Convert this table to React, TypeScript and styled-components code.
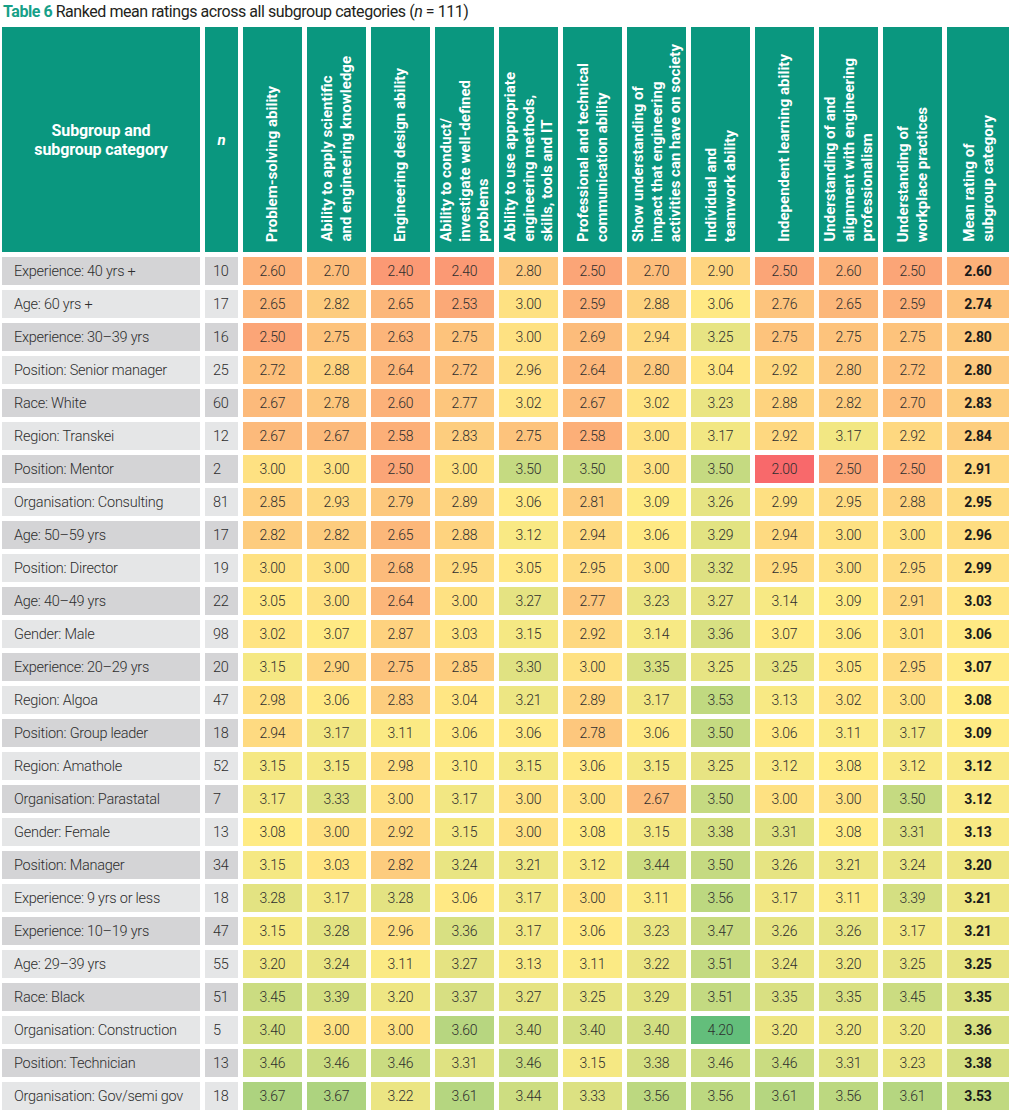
import React from 'react'
import styled, { createGlobalStyle } from 'styled-components'

const GlobalStyle = createGlobalStyle`
  html, body {
    margin: 0;
    padding: 0;
    background: #ffffff;
  }
  body {
    font-family: Roboto, "Liberation Sans", Arial, sans-serif;
    color: #333333;
  }
`

const Page = styled.div`
  padding: 2px 0 0 2px;
  width: 1013px;
`

const Title = styled.div`
  font-size: 16px;
  line-height: 20px;
  color: #231f20;
  letter-spacing: -0.45px;
  margin: 0 0 5px 1px;
  white-space: nowrap;
`

const TableNo = styled.span`
  color: #16a088;
  font-weight: 700;
`

const Grid = styled.div`
  display: grid;
  grid-template-columns: 198px 33px repeat(11, 59px) 62px;
  grid-template-rows: 225px repeat(26, 28px);
  column-gap: 5px;
  row-gap: 5px;
`

const HeadCell = styled.div<{ $centered?: boolean }>`
  background: #0a977f;
  color: #ffffff;
  font-weight: 700;
  display: flex;
  justify-content: center;
  align-items: ${(p) => (p.$centered ? 'center' : 'flex-end')};
  padding-bottom: ${(p) => (p.$centered ? '0' : '10px')};
  box-sizing: border-box;
  text-align: center;
`

const CategoryHead = styled.div`
  font-size: 16px;
  line-height: 19px;
  letter-spacing: -0.1px;
`

const NHead = styled.div`
  font-size: 15px;
  font-style: italic;
`

const VerticalLabel = styled.div`
  writing-mode: vertical-rl;
  transform: rotate(180deg);
  text-align: left;
  white-space: nowrap;
  font-size: 15px;
  line-height: 18.5px;
  letter-spacing: 0;
`

const LabelCell = styled.div<{ $dark: boolean }>`
  background: ${(p) => (p.$dark ? '#d4d4d6' : '#e5e6e7')};
  display: flex;
  align-items: center;
  padding-left: 12px;
  font-size: 14.5px;
  font-weight: 300;
  color: #2e2e2e;
  white-space: nowrap;
  letter-spacing: -0.25px;
`

const CountCell = styled(LabelCell)`
  padding-left: 8px;
`

const ValueCell = styled.div<{ $bold?: boolean }>`
  display: flex;
  align-items: center;
  justify-content: center;
  font-size: 14px;
  font-weight: ${(p) => (p.$bold ? 700 : 300)};
  color: ${(p) => (p.$bold ? '#1a1a1a' : '#2e2e2e')};
  letter-spacing: -0.2px;
`

const headers: string[][] = [
  ['Problem-solving ability'],
  ['Ability to apply scientific', 'and engineering knowledge'],
  ['Engineering design ability'],
  ['Ability to conduct/', 'investigate well-defined', 'problems'],
  ['Ability to use appropriate', 'engineering methods,', 'skills, tools and IT'],
  ['Professional and technical', 'communication ability'],
  ['Show understanding of', 'impact that engineering', 'activities can have on society'],
  ['Individual and', 'teamwork ability'],
  ['Independent learning ability'],
  ['Understanding of and', 'alignment with engineering', 'professionalism'],
  ['Understanding of', 'workplace practices'],
  ['Mean rating of', 'subgroup category'],
]

type Row = [string, number, number[]]

const rows: Row[] = [
  ['Experience: 40 yrs +', 10, [2.6, 2.7, 2.4, 2.4, 2.8, 2.5, 2.7, 2.9, 2.5, 2.6, 2.5, 2.6]],
  ['Age: 60 yrs +', 17, [2.65, 2.82, 2.65, 2.53, 3.0, 2.59, 2.88, 3.06, 2.76, 2.65, 2.59, 2.74]],
  ['Experience: 30–39 yrs', 16, [2.5, 2.75, 2.63, 2.75, 3.0, 2.69, 2.94, 3.25, 2.75, 2.75, 2.75, 2.8]],
  ['Position: Senior manager', 25, [2.72, 2.88, 2.64, 2.72, 2.96, 2.64, 2.8, 3.04, 2.92, 2.8, 2.72, 2.8]],
  ['Race: White', 60, [2.67, 2.78, 2.6, 2.77, 3.02, 2.67, 3.02, 3.23, 2.88, 2.82, 2.7, 2.83]],
  ['Region: Transkei', 12, [2.67, 2.67, 2.58, 2.83, 2.75, 2.58, 3.0, 3.17, 2.92, 3.17, 2.92, 2.84]],
  ['Position: Mentor', 2, [3.0, 3.0, 2.5, 3.0, 3.5, 3.5, 3.0, 3.5, 2.0, 2.5, 2.5, 2.91]],
  ['Organisation: Consulting', 81, [2.85, 2.93, 2.79, 2.89, 3.06, 2.81, 3.09, 3.26, 2.99, 2.95, 2.88, 2.95]],
  ['Age: 50–59 yrs', 17, [2.82, 2.82, 2.65, 2.88, 3.12, 2.94, 3.06, 3.29, 2.94, 3.0, 3.0, 2.96]],
  ['Position: Director', 19, [3.0, 3.0, 2.68, 2.95, 3.05, 2.95, 3.0, 3.32, 2.95, 3.0, 2.95, 2.99]],
  ['Age: 40–49 yrs', 22, [3.05, 3.0, 2.64, 3.0, 3.27, 2.77, 3.23, 3.27, 3.14, 3.09, 2.91, 3.03]],
  ['Gender: Male', 98, [3.02, 3.07, 2.87, 3.03, 3.15, 2.92, 3.14, 3.36, 3.07, 3.06, 3.01, 3.06]],
  ['Experience: 20–29 yrs', 20, [3.15, 2.9, 2.75, 2.85, 3.3, 3.0, 3.35, 3.25, 3.25, 3.05, 2.95, 3.07]],
  ['Region: Algoa', 47, [2.98, 3.06, 2.83, 3.04, 3.21, 2.89, 3.17, 3.53, 3.13, 3.02, 3.0, 3.08]],
  ['Position: Group leader', 18, [2.94, 3.17, 3.11, 3.06, 3.06, 2.78, 3.06, 3.5, 3.06, 3.11, 3.17, 3.09]],
  ['Region: Amathole', 52, [3.15, 3.15, 2.98, 3.1, 3.15, 3.06, 3.15, 3.25, 3.12, 3.08, 3.12, 3.12]],
  ['Organisation: Parastatal', 7, [3.17, 3.33, 3.0, 3.17, 3.0, 3.0, 2.67, 3.5, 3.0, 3.0, 3.5, 3.12]],
  ['Gender: Female', 13, [3.08, 3.0, 2.92, 3.15, 3.0, 3.08, 3.15, 3.38, 3.31, 3.08, 3.31, 3.13]],
  ['Position: Manager', 34, [3.15, 3.03, 2.82, 3.24, 3.21, 3.12, 3.44, 3.5, 3.26, 3.21, 3.24, 3.2]],
  ['Experience: 9 yrs or less', 18, [3.28, 3.17, 3.28, 3.06, 3.17, 3.0, 3.11, 3.56, 3.17, 3.11, 3.39, 3.21]],
  ['Experience: 10–19 yrs', 47, [3.15, 3.28, 2.96, 3.36, 3.17, 3.06, 3.23, 3.47, 3.26, 3.26, 3.17, 3.21]],
  ['Age: 29–39 yrs', 55, [3.2, 3.24, 3.11, 3.27, 3.13, 3.11, 3.22, 3.51, 3.24, 3.2, 3.25, 3.25]],
  ['Race: Black', 51, [3.45, 3.39, 3.2, 3.37, 3.27, 3.25, 3.29, 3.51, 3.35, 3.35, 3.45, 3.35]],
  ['Organisation: Construction', 5, [3.4, 3.0, 3.0, 3.6, 3.4, 3.4, 3.4, 4.2, 3.2, 3.2, 3.2, 3.36]],
  ['Position: Technician', 13, [3.46, 3.46, 3.46, 3.31, 3.46, 3.15, 3.38, 3.46, 3.46, 3.31, 3.23, 3.38]],
  ['Organisation: Gov/semi gov', 18, [3.67, 3.67, 3.22, 3.61, 3.44, 3.33, 3.56, 3.56, 3.61, 3.56, 3.61, 3.53]],
]

// three colour scale: red (low) -> yellow (middle) -> green (high)
const LOW = [248, 105, 107]
const MID = [255, 235, 132]
const HIGH = [99, 190, 123]

const mix = (a: number[], b: number[], t: number) =>
  `rgb(${a.map((c, i) => Math.round(c + (b[i] - c) * t)).join(',')})`

const heat = (v: number) => {
  const min = 2.0
  const mid = 3.08
  const max = 4.2
  if (v <= mid) return mix(LOW, MID, Math.max(0, (v - min) / (mid - min)))
  return mix(MID, HIGH, Math.min(1, (v - mid) / (max - mid)))
}

const App = () => (
  <Page>
    <GlobalStyle />
    <Title>
      <TableNo>Table 6</TableNo> Ranked mean ratings across all subgroup categories (<i>n</i> = 111)
    </Title>
    <Grid>
      <HeadCell $centered>
        <CategoryHead>
          Subgroup and
          <br />
          subgroup category
        </CategoryHead>
      </HeadCell>
      <HeadCell $centered>
        <NHead>n</NHead>
      </HeadCell>
      {headers.map((lines) => (
        <HeadCell key={lines.join(' ')}>
          <VerticalLabel>
            {lines.map((line, i) => (
              <React.Fragment key={line}>
                {i > 0 && <br />}
                {line}
              </React.Fragment>
            ))}
          </VerticalLabel>
        </HeadCell>
      ))}
      {rows.map(([label, n, values], r) => (
        <React.Fragment key={label}>
          <LabelCell $dark={r % 2 === 0}>{label}</LabelCell>
          <CountCell $dark={r % 2 === 0}>{n}</CountCell>
          {values.map((v, c) => (
            <ValueCell key={c} $bold={c === values.length - 1} style={{ background: heat(v) }}>
              {v.toFixed(2)}
            </ValueCell>
          ))}
        </React.Fragment>
      ))}
    </Grid>
  </Page>
)

export default App
